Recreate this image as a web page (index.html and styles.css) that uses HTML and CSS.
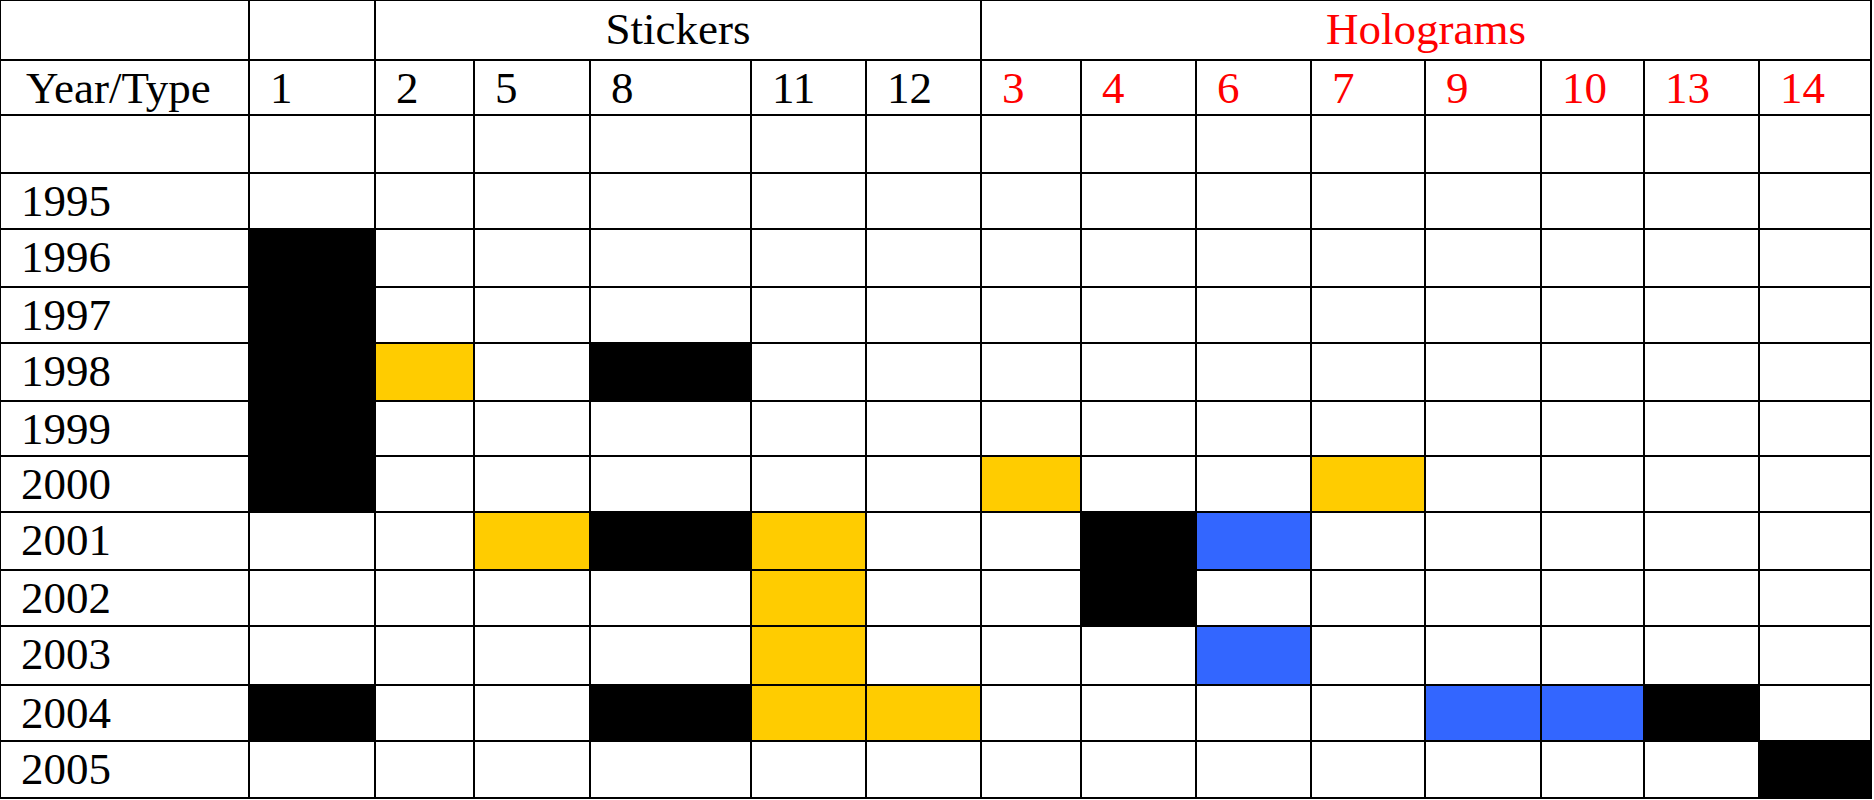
FILE: index.html
```html
<!DOCTYPE html>
<html lang="en">
<head>
<meta charset="utf-8">
<title>Stickers and Holograms</title>
<link rel="stylesheet" href="styles.css">
</head>
<body>
<div class="chart">
  <div class="c"></div><div class="c"></div><div class="c group stickers">Stickers</div><div class="c group holo red">Holograms</div>

  <div class="c yt">Year/Type</div><div class="c">1</div><div class="c">2</div><div class="c">5</div><div class="c">8</div><div class="c">11</div><div class="c">12</div><div class="c red">3</div><div class="c red">4</div><div class="c red">6</div><div class="c red">7</div><div class="c red">9</div><div class="c red">10</div><div class="c red">13</div><div class="c red">14</div>

  <div class="c"></div><div class="c"></div><div class="c"></div><div class="c"></div><div class="c"></div><div class="c"></div><div class="c"></div><div class="c"></div><div class="c"></div><div class="c"></div><div class="c"></div><div class="c"></div><div class="c"></div><div class="c"></div><div class="c"></div>

  <div class="c">1995</div><div class="c"></div><div class="c"></div><div class="c"></div><div class="c"></div><div class="c"></div><div class="c"></div><div class="c"></div><div class="c"></div><div class="c"></div><div class="c"></div><div class="c"></div><div class="c"></div><div class="c"></div><div class="c"></div>

  <div class="c">1996</div><div class="c k"></div><div class="c"></div><div class="c"></div><div class="c"></div><div class="c"></div><div class="c"></div><div class="c"></div><div class="c"></div><div class="c"></div><div class="c"></div><div class="c"></div><div class="c"></div><div class="c"></div><div class="c"></div>

  <div class="c">1997</div><div class="c k"></div><div class="c"></div><div class="c"></div><div class="c"></div><div class="c"></div><div class="c"></div><div class="c"></div><div class="c"></div><div class="c"></div><div class="c"></div><div class="c"></div><div class="c"></div><div class="c"></div><div class="c"></div>

  <div class="c">1998</div><div class="c k"></div><div class="c y"></div><div class="c"></div><div class="c k"></div><div class="c"></div><div class="c"></div><div class="c"></div><div class="c"></div><div class="c"></div><div class="c"></div><div class="c"></div><div class="c"></div><div class="c"></div><div class="c"></div>

  <div class="c">1999</div><div class="c k"></div><div class="c"></div><div class="c"></div><div class="c"></div><div class="c"></div><div class="c"></div><div class="c"></div><div class="c"></div><div class="c"></div><div class="c"></div><div class="c"></div><div class="c"></div><div class="c"></div><div class="c"></div>

  <div class="c">2000</div><div class="c k"></div><div class="c"></div><div class="c"></div><div class="c"></div><div class="c"></div><div class="c"></div><div class="c y"></div><div class="c"></div><div class="c"></div><div class="c y"></div><div class="c"></div><div class="c"></div><div class="c"></div><div class="c"></div>

  <div class="c">2001</div><div class="c"></div><div class="c"></div><div class="c y"></div><div class="c k"></div><div class="c y"></div><div class="c"></div><div class="c"></div><div class="c k"></div><div class="c b"></div><div class="c"></div><div class="c"></div><div class="c"></div><div class="c"></div><div class="c"></div>

  <div class="c">2002</div><div class="c"></div><div class="c"></div><div class="c"></div><div class="c"></div><div class="c y"></div><div class="c"></div><div class="c"></div><div class="c k"></div><div class="c"></div><div class="c"></div><div class="c"></div><div class="c"></div><div class="c"></div><div class="c"></div>

  <div class="c">2003</div><div class="c"></div><div class="c"></div><div class="c"></div><div class="c"></div><div class="c y"></div><div class="c"></div><div class="c"></div><div class="c"></div><div class="c b"></div><div class="c"></div><div class="c"></div><div class="c"></div><div class="c"></div><div class="c"></div>

  <div class="c">2004</div><div class="c k"></div><div class="c"></div><div class="c"></div><div class="c k"></div><div class="c y"></div><div class="c y"></div><div class="c"></div><div class="c"></div><div class="c"></div><div class="c"></div><div class="c b"></div><div class="c b"></div><div class="c k"></div><div class="c"></div>

  <div class="c">2005</div><div class="c"></div><div class="c"></div><div class="c"></div><div class="c"></div><div class="c"></div><div class="c"></div><div class="c"></div><div class="c"></div><div class="c"></div><div class="c"></div><div class="c"></div><div class="c"></div><div class="c"></div><div class="c k"></div>
</div>
</body>
</html>
```

FILE: styles.css
```css
html, body {
  margin: 0;
  padding: 0;
  background: #ffffff;
}

.chart {
  display: grid;
  grid-template-columns: 247px 124px 97px 114px 159px 113px 113px 98px 113px 113px 112px 114px 101px 113px 110px;
  grid-template-rows: 58px 53px 56px 54px 56px 54px 56px 53px 54px 56px 54px 57px 54px 55px;
  gap: 2px;
  padding: 1px 2px 2px 1px;
  background: #000000;
  width: max-content;
}

.c {
  background: #ffffff;
  color: #000000;
  font-family: "Liberation Serif", "Times New Roman", serif;
  font-size: 45px;
  line-height: 45px;
  padding: 5px 0 0 20px;
  white-space: nowrap;
  overflow: hidden;
}

.yt {
  padding-left: 25px;
}

.group {
  text-align: center;
  padding-left: 0;
  padding-top: 6px;
}

.stickers {
  grid-column: span 5;
}

.holo {
  grid-column: span 8;
}

.red {
  color: #ff0000;
}

.k {
  background: #000000;
}

.y {
  background: #ffcc00;
}

.b {
  background: #3366ff;
}
```
